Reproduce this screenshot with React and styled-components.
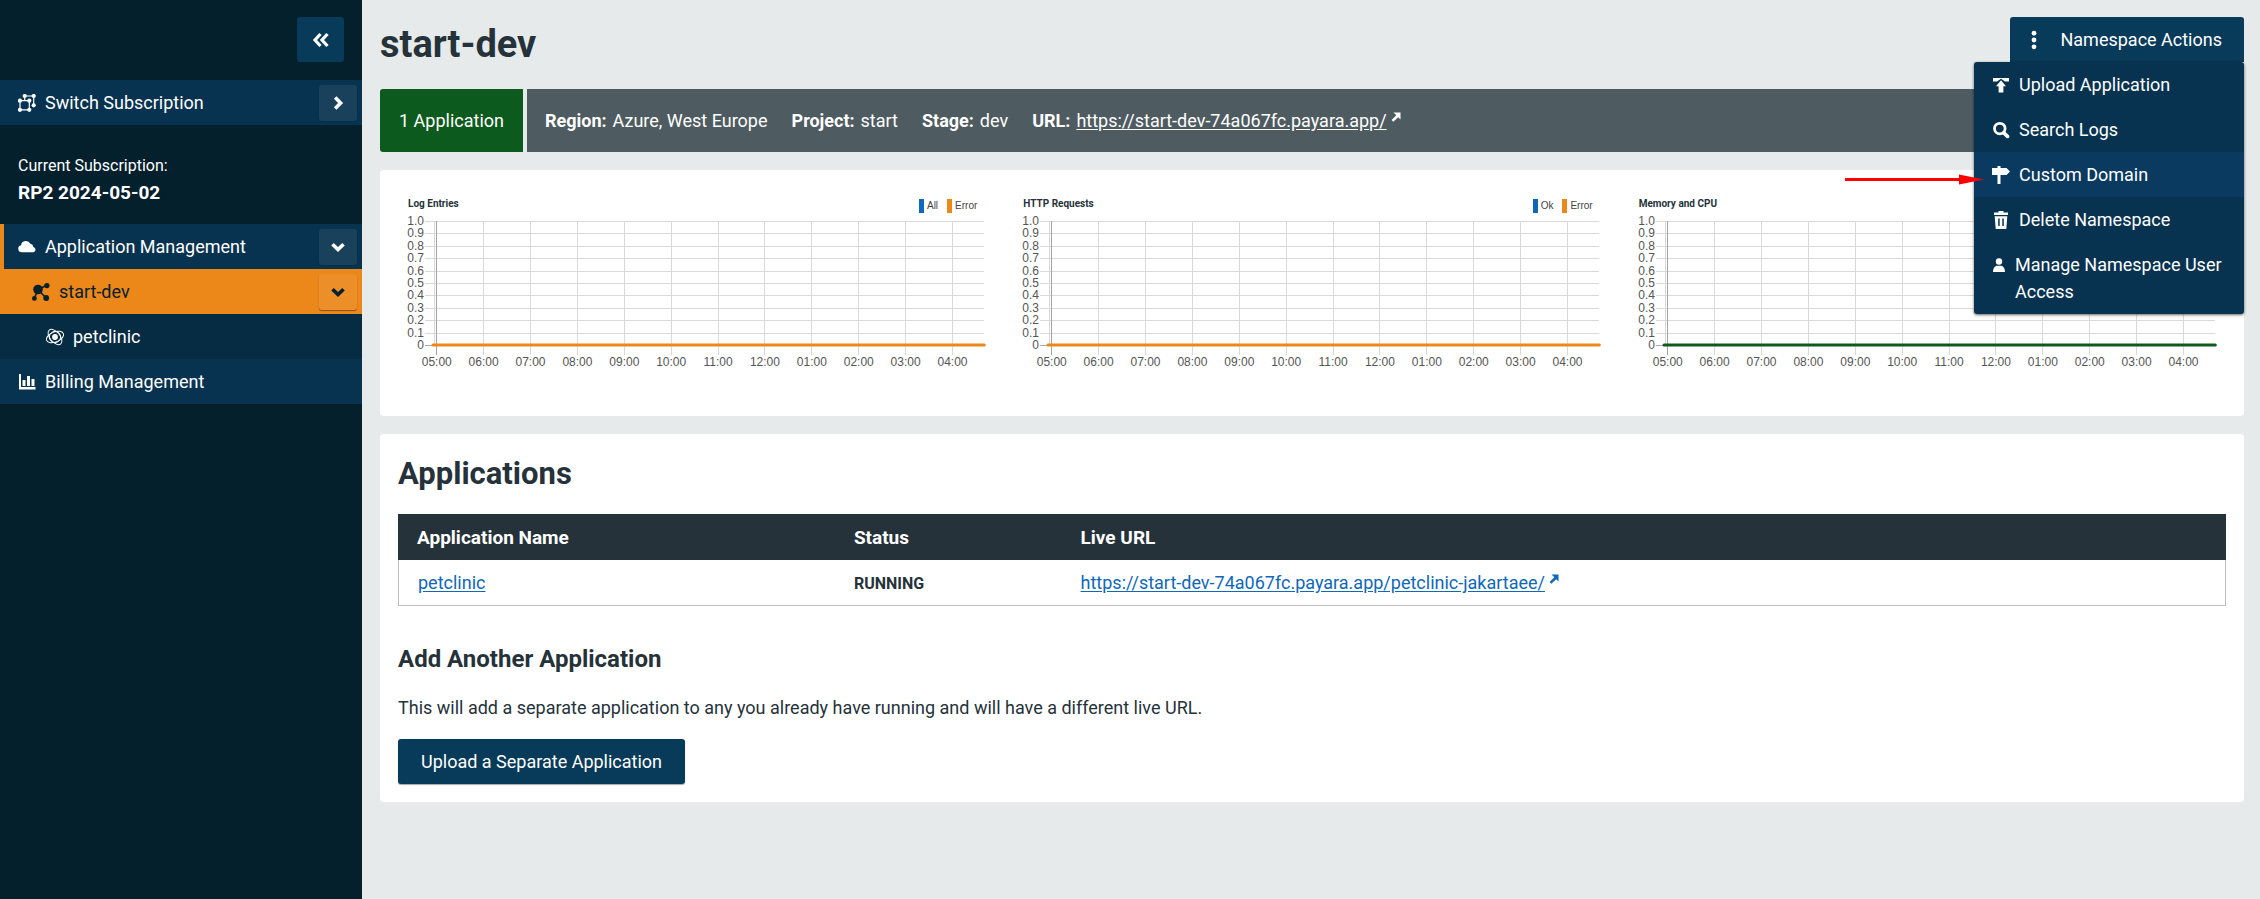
import React from "react";
import styled, { createGlobalStyle, css } from "styled-components";

const color = {
  sidebar: "#04202d",
  nav: "#083350",
  navDeep: "#062c43",
  navHover: "#0a3a60",
  button: "#083a59",
  orange: "#ec8719",
  green: "#0c5a1e",
  slate: "#4e5b60",
  ink: "#25323a",
  link: "#1068b8",
  page: "#e6eaea",
  line: "#bcc0c2",
};

const GlobalStyle = createGlobalStyle`
  *, *::before, *::after { box-sizing: border-box; }
  body {
    margin: 0;
    background: ${color.page};
    color: ${color.ink};
    font-family: Roboto, "Liberation Sans", sans-serif;
    font-size: 18px;
    line-height: 27px;
  }
  button { font: inherit; border: 0; cursor: pointer; }
  svg { display: block; flex: none; }
`;

/* ---------- icons ---------- */

const Icon = ({ children, width = 18, height = 18 }) => (
  <svg width={width} height={height} viewBox={`0 0 ${width} ${height}`} fill="currentColor" aria-hidden="true">
    {children}
  </svg>
);

const CollapseIcon = () => (
  <Icon>
    <path d="M8.500 3 3 9l5.500 6M15.500 3 10 9l5.500 6" fill="none" stroke="currentColor" strokeWidth="3.200" />
  </Icon>
);

const ChevronIcon = ({ down }) => (
  <Icon>
    <path d={down ? "M3.500 6.200 9 11.600l5.500-5.400" : "M6.200 3.500 11.600 9l-5.400 5.500"} fill="none" stroke="currentColor" strokeWidth="3.600" />
  </Icon>
);

const SwitchIcon = () => {
  const nodes = [[6.7, 2], [15.7, 2], [2, 6.7], [11.3, 6.7], [15.7, 11.3], [2, 15.8], [11.3, 15.8]];
  return (
    <Icon>
      <path d="M2 6.700h9.300v9.100H2zM6.700 6V2h9v9.300" fill="none" stroke="currentColor" strokeWidth="1.200" />
      {nodes.map(([x, y]) => <circle key={`${x}-${y}`} cx={x} cy={y} r="2.100" />)}
    </Icon>
  );
};

const CloudIcon = () => (
  <Icon>
    <path d="M3.800 14.300a3.600 3.600 0 0 1-.8-7.100A5 5 0 0 1 12.400 5.800a3.600 3.600 0 0 1 3 3.200 2.700 2.700 0 0 1-.2 5.300z" />
  </Icon>
);

const NetworkIcon = () => (
  <Icon>
    <path d="M6 6.500 14.800 2.300M6 6.500 14 15M6 6.500 2.300 15.400" fill="none" stroke="currentColor" strokeWidth="1.600" />
    <circle cx="6" cy="6.500" r="4.800" />
    <circle cx="14.900" cy="2.600" r="2.600" />
    <circle cx="14.200" cy="15" r="2.900" />
    <circle cx="2.400" cy="15.400" r="2.400" />
  </Icon>
);

const AtomIcon = () => (
  <Icon>
    <circle cx="9" cy="9" r="2.900" />
    <g fill="none" stroke="currentColor" strokeWidth="1">
      <ellipse cx="9" cy="9" rx="9" ry="5" transform="rotate(-22 9 9)" />
      <ellipse cx="9" cy="9" rx="9" ry="5" transform="rotate(50 9 9)" />
      <circle cx="9" cy="9" r="5.600" />
    </g>
  </Icon>
);

const BarsIcon = () => (
  <Icon>
    <path d="M1 1h2v13h14.500v2.500H1zM4.500 7h3v6h-3zM9 3h3v10H9zM13.500 6h3v7h-3z" />
  </Icon>
);

const DotsIcon = () => (
  <Icon width={12} height={20}>
    <circle cx="6" cy="3.200" r="2.400" />
    <circle cx="6" cy="10" r="2.400" />
    <circle cx="6" cy="16.800" r="2.400" />
  </Icon>
);

const UploadIcon = () => (
  <Icon>
    <path d="M1 2h16v3.500h-4L9 2.800 5 5.500H1z" />
    <path d="M9 4.300 14 10.200h-2.600V16.500H6.600V10.200H4z" />
  </Icon>
);

const SearchIcon = () => (
  <Icon>
    <circle cx="7.800" cy="7.600" r="5.300" fill="none" stroke="currentColor" strokeWidth="2.800" />
    <path d="M11.700 11.700 15.500 15.400" stroke="currentColor" strokeWidth="3.600" strokeLinecap="round" />
  </Icon>
);

const SignpostIcon = () => (
  <Icon>
    <path d="M5.500 0h3v2h6L18 5.500 14.500 9h-6v9h-3V9H0V2h5.500z" />
  </Icon>
);

const TrashIcon = () => (
  <Icon>
    <path d="M6.500 0h5v1.500H16V4H2V1.500h4.500z" />
    <path fillRule="evenodd" d="M2.700 5.200h12.600l-1 12.800H3.700zM6.200 7.500v7.500h1.500V7.500zm4.100 0v7.500h1.500V7.500z" />
  </Icon>
);

const UserIcon = () => (
  <Icon width={14}>
    <circle cx="7" cy="5.500" r="3.200" />
    <path d="M1 16c0-4 2-6.300 4.200-6.300h3.600C11 9.700 13 12 13 16z" />
  </Icon>
);

const ExternalIcon = () => (
  <Icon width={10} height={10}>
    <path d="M2.500 0.500H9.500v7L7.200 5.200 2.300 9.800.600 8 5.300 3.200z" />
  </Icon>
);

/* ---------- layout ---------- */

const Layout = styled.div`
  display: grid;
  grid-template-columns: 362px minmax(0, 1fr);
  min-height: 100vh;
`;

const Sidebar = styled.aside`
  background: ${color.sidebar};
  color: #fff;
  padding-top: 17px;
`;

const CollapseButton = styled.button`
  display: flex;
  align-items: center;
  justify-content: center;
  width: 47px;
  height: 45px;
  margin: 0 18px 18px auto;
  padding: 0;
  border-radius: 3px;
  background: ${color.button};
  color: #fff;
`;

const NavRow = styled.div`
  display: flex;
  align-items: center;
  gap: 9px;
  height: 45px;
  padding: 0 5px 0 ${({ $level = 0 }) => 18 + $level * 14}px;
  background: ${color.nav};
  ${({ $open }) => $open && css`
    border-left: 4px solid ${color.orange};
    padding-left: 14px;
  `}
  ${({ $active }) => $active && css`
    background: ${color.orange};
    color: ${color.sidebar};
  `}
  ${({ $deep }) => $deep && css`
    background: ${color.navDeep};
  `}
`;

const NavLink = styled.a`
  display: flex;
  flex: 1;
  align-items: center;
  gap: 9px;
  color: inherit;
  text-decoration: none;
`;

const RowToggle = styled.button`
  display: flex;
  align-items: center;
  justify-content: center;
  width: 38px;
  height: 36px;
  padding: 0;
  border-radius: 3px;
  background: rgba(255, 255, 255, 0.07);
  box-shadow: 0 1px 1px rgba(0, 0, 0, ${({ $raised }) => ($raised ? 0.4 : 0.1)});
  color: inherit;
`;

const Subscription = styled.div`
  padding: 27px 18px 18px;
`;

const SubscriptionLabel = styled.div`
  font-size: 16px;
`;

const SubscriptionName = styled.div`
  font-size: 19px;
  font-weight: 700;
`;

const Main = styled.main`
  padding: 17px 16px 17px 18px;
`;

const PageHeader = styled.header`
  display: flex;
  align-items: flex-start;
  justify-content: space-between;
  margin-bottom: 18px;
`;

const PageTitle = styled.h1`
  margin: 0;
  font-size: 38px;
  line-height: 54px;
`;

/* ---------- namespace menu ---------- */

const MenuAnchor = styled.div`
  position: relative;
`;

const MenuButton = styled.button`
  display: flex;
  align-items: center;
  gap: 20px;
  height: 45px;
  padding: 0 22px 0 18px;
  border-radius: 3px 3px 0 0;
  background: ${color.button};
  color: #fff;
`;

const Menu = styled.div`
  position: absolute;
  z-index: 1;
  top: 100%;
  right: 0;
  width: 270px;
  border-radius: 3px;
  background: ${color.nav};
  box-shadow: 0 1px 3px rgba(0, 0, 0, 0.6);
`;

const MenuItem = styled.button`
  position: relative;
  display: flex;
  align-items: flex-start;
  gap: 9px;
  width: 100%;
  padding: 9px 18px;
  background: ${({ $hovered }) => ($hovered ? color.navHover : "transparent")};
  color: #fff;
  text-align: left;

  > svg:first-child { margin-top: 5px; }
`;

const Pointer = styled.svg`
  position: absolute;
  top: 17px;
  right: calc(100% - 10px);
`;

/* ---------- status bar ---------- */

const StatusBar = styled.section`
  display: flex;
  gap: 4px;
  margin-bottom: 18px;
  color: #fff;
`;

const AppCount = styled.div`
  padding: 18px 19px;
  border-radius: 3px 0 0 3px;
  background: ${color.green};
`;

const Facts = styled.dl`
  display: flex;
  flex: 1;
  flex-wrap: wrap;
  gap: 0 24px;
  margin: 0;
  padding: 18px;
  border-radius: 0 3px 3px 0;
  background: ${color.slate};
`;

const Fact = styled.div`
  display: flex;
  gap: 6px;

  dt { font-weight: 700; }
  dd { margin: 0; }
`;

const TextLink = styled.a`
  color: ${({ $light }) => ($light ? "#fff" : color.link)};
  text-underline-offset: 2px;
`;

const External = styled.span`
  display: inline-flex;
  align-items: flex-start;
  gap: 4px;

  > svg { margin-top: 5px; color: ${({ $light }) => ($light ? "#fff" : color.link)}; }
`;

/* ---------- cards and charts ---------- */

const Card = styled.section`
  margin-bottom: 18px;
  padding: 18px;
  border-radius: 4px;
  background: #fff;
`;

const ChartGrid = styled(Card)`
  display: grid;
  grid-template-columns: repeat(3, minmax(0, 1fr));
  gap: 18px;
`;

const ChartPanel = styled.figure`
  margin: 0;
  height: 210px;
`;

const ChartHeader = styled.figcaption`
  display: flex;
  align-items: flex-start;
  justify-content: space-between;
  height: 33px;
  padding: 9px 18px 0 10px;
  line-height: 14px;
`;

const ChartTitle = styled.span`
  font-size: 10px;
  font-weight: 700;
`;

const Legend = styled.span`
  display: flex;
  gap: 9px;
  margin-top: 2px;
  color: #444;
  font-family: "Liberation Sans", sans-serif;
  font-size: 10px;
`;

const LegendItem = styled.span`
  display: flex;
  gap: 3px;

  &::before {
    content: "";
    width: 5px;
    background: ${({ $color }) => $color};
  }
`;

const PlotArea = styled.div`
  padding: 0 11px 0 36px;
`;

const Plot = styled.svg`
  width: 100%;
  height: 150px;
  overflow: visible;
  fill: #555;
  font-family: "Liberation Sans", sans-serif;
  font-size: 12px;
`;

const HOURS = ["05:00", "06:00", "07:00", "08:00", "09:00", "10:00", "11:00", "12:00", "01:00", "02:00", "03:00", "04:00"];
const LEVELS = ["1.0", "0.9", "0.8", "0.7", "0.6", "0.5", "0.4", "0.3", "0.2", "0.1", "0"];
const PLOT_HEIGHT = 124;

function Chart({ title, series, lineColor }) {
  return (
    <ChartPanel>
      <ChartHeader>
        <ChartTitle>{title}</ChartTitle>
        {series && (
          <Legend>
            {series.map((s) => <LegendItem key={s.name} $color={s.color}>{s.name}</LegendItem>)}
          </Legend>
        )}
      </ChartHeader>
      <PlotArea>
        <Plot role="img" aria-label={title}>
          <g shapeRendering="crispEdges">
            {LEVELS.map((label, i) => {
              const y = Math.round((i * PLOT_HEIGHT) / 10);
              return (
                <React.Fragment key={label}>
                  <line x1="-9" x2="100%" y1={y} y2={y} stroke={i === 10 ? "#aaa" : "#d9d9d9"} />
                  <text x="-10" y={y + 4} textAnchor="end">{label}</text>
                </React.Fragment>
              );
            })}
            <line x1="0" x2="0" y1="0" y2={PLOT_HEIGHT} stroke="#d9d9d9" />
            {HOURS.map((label, i) => {
              const x = `${0.5 + i * 8.52}%`;
              return (
                <React.Fragment key={label}>
                  <line x1={x} x2={x} y1="0" y2={PLOT_HEIGHT + 10} stroke={i === 0 ? "#a4a4a4" : "#d9d9d9"} />
                  <text x={x} y={PLOT_HEIGHT + 21} textAnchor="middle">{label}</text>
                </React.Fragment>
              );
            })}
          </g>
          <line x1="-1" x2="100%" y1={PLOT_HEIGHT} y2={PLOT_HEIGHT} stroke={lineColor} strokeWidth="3" strokeLinecap="round" />
        </Plot>
      </PlotArea>
    </ChartPanel>
  );
}

/* ---------- applications ---------- */

const SectionTitle = styled.h2`
  margin: 0 0 18px;
  font-size: 31px;
  line-height: 44px;
`;

const SubTitle = styled.h3`
  margin: 36px 0 18px;
  font-size: 24px;
  line-height: 34px;
`;

const Paragraph = styled.p`
  margin: 0 0 18px;
`;

const AppTable = styled.table`
  width: 100%;
  border-collapse: separate;
  border-spacing: 0;
  table-layout: fixed;

  th {
    height: 46px;
    padding: 0 19px;
    background: ${color.ink};
    color: #fff;
    font-size: 19px;
    text-align: left;
  }
  td {
    height: 46px;
    padding: 0 19px;
    border-bottom: 1px solid ${color.line};
  }
  td:first-child { border-left: 1px solid ${color.line}; }
  td:last-child { border-right: 1px solid ${color.line}; }
  th:nth-child(1) { width: 23.9%; }
  th:nth-child(2) { width: 12.4%; }
`;

const Status = styled.span`
  font-size: 16px;
  font-weight: 700;
`;

const PrimaryButton = styled.button`
  display: block;
  height: 45px;
  padding: 0 23px;
  border-radius: 3px;
  background: ${color.button};
  box-shadow: 0 1px 1px rgba(0, 0, 0, 0.35);
  color: #fff;
`;

const ExternalLink = ({ href, light }) => (
  <External $light={light}>
    <TextLink href={href} $light={light}>{href}</TextLink>
    <ExternalIcon />
  </External>
);

const menuItems = [
  { label: "Upload Application", icon: <UploadIcon /> },
  { label: "Search Logs", icon: <SearchIcon /> },
  { label: "Custom Domain", icon: <SignpostIcon />, hovered: true },
  { label: "Delete Namespace", icon: <TrashIcon /> },
  { label: "Manage Namespace User Access", icon: <UserIcon /> },
];

export default function App() {
  return (
    <>
      <GlobalStyle />
      <Layout>
        <Sidebar>
          <CollapseButton type="button" aria-label="Collapse sidebar"><CollapseIcon /></CollapseButton>
          <nav>
            <NavRow>
              <NavLink href="#subscriptions"><SwitchIcon />Switch Subscription</NavLink>
              <RowToggle type="button" aria-label="Show subscriptions"><ChevronIcon /></RowToggle>
            </NavRow>
            <Subscription>
              <SubscriptionLabel>Current Subscription:</SubscriptionLabel>
              <SubscriptionName>RP2 2024-05-02</SubscriptionName>
            </Subscription>
            <NavRow $open>
              <NavLink href="#applications"><CloudIcon />Application Management</NavLink>
              <RowToggle type="button" aria-label="Toggle applications"><ChevronIcon down /></RowToggle>
            </NavRow>
            <NavRow $active $level={1}>
              <NavLink href="#start-dev"><NetworkIcon />start-dev</NavLink>
              <RowToggle type="button" aria-label="Toggle start-dev" $raised><ChevronIcon down /></RowToggle>
            </NavRow>
            <NavRow $deep $level={2}>
              <NavLink href="#petclinic"><AtomIcon />petclinic</NavLink>
            </NavRow>
            <NavRow>
              <NavLink href="#billing"><BarsIcon />Billing Management</NavLink>
            </NavRow>
          </nav>
        </Sidebar>

        <Main>
          <PageHeader>
            <PageTitle>start-dev</PageTitle>
            <MenuAnchor>
              <MenuButton type="button" aria-haspopup="menu" aria-expanded="true">
                <DotsIcon />Namespace Actions
              </MenuButton>
              <Menu role="menu">
                {menuItems.map((item) => (
                  <MenuItem key={item.label} type="button" role="menuitem" $hovered={item.hovered}>
                    {item.icon}
                    <span>{item.label}</span>
                    {item.hovered && (
                      <Pointer width="139" height="20" viewBox="0 0 139 20" aria-hidden="true">
                        <path d="M0 9h114V5.500l25 5L114 15.500V12H0z" fill="#f00" />
                      </Pointer>
                    )}
                  </MenuItem>
                ))}
              </Menu>
            </MenuAnchor>
          </PageHeader>

          <StatusBar>
            <AppCount>1 Application</AppCount>
            <Facts>
              <Fact><dt>Region:</dt><dd>Azure, West Europe</dd></Fact>
              <Fact><dt>Project:</dt><dd>start</dd></Fact>
              <Fact><dt>Stage:</dt><dd>dev</dd></Fact>
              <Fact><dt>URL:</dt><dd><ExternalLink light href="https://start-dev-74a067fc.payara.app/" /></dd></Fact>
            </Facts>
          </StatusBar>

          <ChartGrid>
            <Chart
              title="Log Entries"
              lineColor={color.orange}
              series={[{ name: "All", color: color.link }, { name: "Error", color: color.orange }]}
            />
            <Chart
              title="HTTP Requests"
              lineColor={color.orange}
              series={[{ name: "Ok", color: color.link }, { name: "Error", color: color.orange }]}
            />
            <Chart title="Memory and CPU" lineColor={color.green} />
          </ChartGrid>

          <Card>
            <SectionTitle>Applications</SectionTitle>
            <AppTable>
              <thead>
                <tr><th scope="col">Application Name</th><th scope="col">Status</th><th scope="col">Live URL</th></tr>
              </thead>
              <tbody>
                <tr>
                  <td><TextLink href="#petclinic">petclinic</TextLink></td>
                  <td><Status>RUNNING</Status></td>
                  <td><ExternalLink href="https://start-dev-74a067fc.payara.app/petclinic-jakartaee/" /></td>
                </tr>
              </tbody>
            </AppTable>
            <SubTitle>Add Another Application</SubTitle>
            <Paragraph>
              This will add a separate application to any you already have running and will have a different live URL.
            </Paragraph>
            <PrimaryButton type="button">Upload a Separate Application</PrimaryButton>
          </Card>
        </Main>
      </Layout>
    </>
  );
}
